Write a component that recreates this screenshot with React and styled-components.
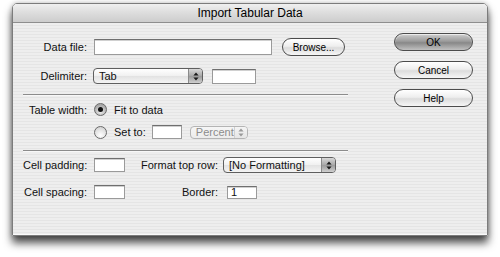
import React from "react";
import styled, { createGlobalStyle } from "styled-components";

const GlobalStyle = createGlobalStyle`
  html, body {
    margin: 0;
    padding: 0;
    background: #ffffff;
  }
  body {
    font-family: "Liberation Sans", Arial, sans-serif;
    font-size: 11px;
    color: #111;
  }
`;

const Page = styled.div`
  width: 500px;
  height: 257px;
  padding: 3px 0 0 12px;
  box-sizing: border-box;
`;

const Window = styled.div`
  width: 476px;
  height: 233px;
  box-sizing: border-box;
  border: 1px solid #7c7c7c;
  border-radius: 5px 5px 1px 1px;
  box-shadow: 0 7px 8px rgba(0, 0, 0, 0.7), 0 0 5px rgba(0, 0, 0, 0.25);
  display: flex;
  flex-direction: column;
  overflow: hidden;
`;

const TitleBar = styled.div`
  height: 18px;
  flex: none;
  display: flex;
  align-items: center;
  justify-content: center;
  font-size: 12px;
  color: #000;
  border-bottom: 1px solid #8e8e8e;
  background: linear-gradient(#f0f0f0, #dedede 45%, #cdcdcd);
`;

const Body = styled.div`
  flex: 1;
  display: flex;
  padding: 15px 14px 0 10px;
  border-bottom: 1px solid #fafafa;
  background: repeating-linear-gradient(
    to bottom,
    #eeeeee 0,
    #eeeeee 2px,
    #e5e5e5 2px,
    #e5e5e5 3px
  );
`;

const Form = styled.div`
  width: 325px;
  display: flex;
  flex-direction: column;
`;

const Row = styled.div`
  display: flex;
  align-items: center;
  height: ${(p) => p.$h}px;
  margin-top: ${(p) => p.$mt || 0}px;
`;

const Label = styled.span`
  width: ${(p) => p.$w || 64}px;
  flex: none;
  text-align: right;
  white-space: nowrap;
`;

const Text = styled.span`
  margin-left: ${(p) => p.$ml || 0}px;
  white-space: nowrap;
`;

const Field = styled.div`
  flex: none;
  box-sizing: border-box;
  width: ${(p) => p.$w}px;
  height: ${(p) => p.$h || 14}px;
  margin-left: ${(p) => p.$ml || 0}px;
  background: #fff;
  border: 1px solid #9a9a9a;
  border-top-color: #6f6f6f;
  box-shadow: inset 0 1px 0 #d0d0d0;
  padding: 0 3px;
  line-height: ${(p) => (p.$h || 14) - 2}px;
  font-size: 11px;
`;

const Select = styled.div`
  flex: none;
  box-sizing: border-box;
  display: flex;
  width: ${(p) => p.$w}px;
  height: ${(p) => p.$h || 16}px;
  margin-left: ${(p) => p.$ml || 0}px;
  border: 1px solid ${(p) => (p.$disabled ? "#b4b4b4" : "#5f5f5f")};
  border-radius: 4px;
  overflow: hidden;
  background: ${(p) =>
    p.$disabled
      ? "linear-gradient(#f6f6f6, #ececec)"
      : "linear-gradient(#ffffff, #f0f0f0 50%, #e2e2e2 51%, #f4f4f4)"};
  color: ${(p) => (p.$disabled ? "#8c8c8c" : "#111")};
`;

const SelectText = styled.span`
  flex: 1;
  padding-left: 5px;
  display: flex;
  align-items: center;
  white-space: nowrap;
`;

const ArrowBox = styled.span`
  width: 13px;
  flex: none;
  display: flex;
  align-items: center;
  justify-content: center;
  border-left: 1px solid ${(p) => (p.$disabled ? "#d0d0d0" : "#8a8a8a")};
  background: ${(p) =>
    p.$disabled
      ? "linear-gradient(#f4f4f4, #e6e6e6)"
      : "linear-gradient(#d8d8d8, #a8a8a8 50%, #9a9a9a 51%, #cfcfcf)"};
`;

const Arrows = ({ color }) => (
  <svg width="6" height="9" viewBox="0 0 6 9">
    <path d="M3 0.5 L5.6 3.6 H0.4Z M3 8.5 L5.6 5.4 H0.4Z" fill={color} />
  </svg>
);

const DropDown = ({ value, w, h, ml, disabled }) => (
  <Select $w={w} $h={h} $ml={ml} $disabled={disabled}>
    <SelectText>{value}</SelectText>
    <ArrowBox $disabled={disabled}>
      <Arrows color={disabled ? "#9a9a9a" : "#1a1a1a"} />
    </ArrowBox>
  </Select>
);

const Radio = styled.span`
  flex: none;
  position: relative;
  box-sizing: border-box;
  width: 13px;
  height: 13px;
  margin-left: ${(p) => p.$ml || 0}px;
  border-radius: 50%;
  border: 1px solid #6a6a6a;
  background: ${(p) =>
    p.$checked
      ? "radial-gradient(circle at 50% 70%, #f0f0f0, #a8a8a8 70%)"
      : "radial-gradient(circle at 50% 75%, #ffffff, #d6d6d6 80%)"};
  &::after {
    content: "";
    display: ${(p) => (p.$checked ? "block" : "none")};
    position: absolute;
    left: 3px;
    top: 3px;
    width: 5px;
    height: 5px;
    border-radius: 50%;
    background: #111;
  }
`;

const Separator = styled.div`
  height: 1px;
  background: #8c8c8c;
  margin-top: ${(p) => p.$mt}px;
  box-shadow: 0 1px 0 #f8f8f8;
`;

const Buttons = styled.div`
  margin-left: auto;
  margin-top: -5px;
  width: 79px;
  display: flex;
  flex-direction: column;
  gap: 10px;
`;

const Button = styled.div`
  flex: none;
  box-sizing: border-box;
  width: ${(p) => p.$w || 79}px;
  height: 18px;
  margin-left: ${(p) => p.$ml || 0}px;
  border: 1px solid #4c4c4c;
  border-radius: 9px;
  display: flex;
  align-items: center;
  justify-content: center;
  font-size: 10px;
  color: #000;
  background: ${(p) =>
    p.$default
      ? "linear-gradient(#cccccc, #9c9c9c 45%, #888888 55%, #c0c0c0)"
      : "linear-gradient(#ffffff, #eeeeee 45%, #dcdcdc 55%, #f6f6f6)"};
  box-shadow: inset 0 1px 1px rgba(255, 255, 255, 0.7);
`;

export default function App() {
  return (
    <>
      <GlobalStyle />
      <Page>
        <Window>
          <TitleBar>Import Tabular Data</TitleBar>
          <Body>
            <Form>
              <Row $h={18}>
                <Label>Data file:</Label>
                <Field $w={178} $h={16} $ml={7} />
                <Button $w={63} $ml={10}>Browse...</Button>
              </Row>
              <Row $h={16} $mt={12}>
                <Label>Delimiter:</Label>
                <DropDown value="Tab" w={110} ml={6} />
                <Field $w={44} $h={15} $ml={9} />
              </Row>
              <Separator $mt={10} />
              <Row $h={13} $mt={8}>
                <Label>Table width:</Label>
                <Radio $ml={7} $checked />
                <Text $ml={7}>Fit to data</Text>
              </Row>
              <Row $h={14} $mt={9}>
                <Label />
                <Radio $ml={7} />
                <Text $ml={7}>Set to:</Text>
                <Field $w={30} $ml={6} />
                <DropDown value="Percent" w={58} h={13} ml={8} disabled />
              </Row>
              <Separator $mt={11} />
              <Row $h={16} $mt={6}>
                <Label>Cell padding:</Label>
                <Field $w={31} $ml={7} />
                <Label $w={93}>Format top row:</Label>
                <DropDown value="[No Formatting]" w={113} ml={5} />
              </Row>
              <Row $h={14} $mt={12}>
                <Label>Cell spacing:</Label>
                <Field $w={31} $ml={7} />
                <Label $w={93}>Border:</Label>
                <Field $w={30} $h={13} $ml={9}>1</Field>
              </Row>
            </Form>
            <Buttons>
              <Button $default>OK</Button>
              <Button>Cancel</Button>
              <Button>Help</Button>
            </Buttons>
          </Body>
        </Window>
      </Page>
    </>
  );
}
